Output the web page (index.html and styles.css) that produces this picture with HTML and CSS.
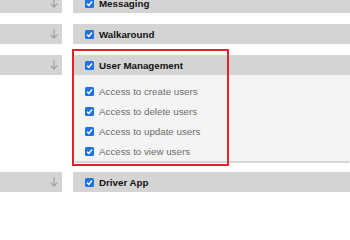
FILE: index.html
```html
<!DOCTYPE html>
<html>
<head>
<meta charset="utf-8">
<link rel="stylesheet" href="styles.css">
</head>
<body>
<div class="list">
  <div class="row row-cut">
    <div class="side"><svg class="arrow" viewBox="0 0 8 10"><path d="M4 0.5V9M0.8 5.8L4 9L7.2 5.8"/></svg></div>
    <div class="main"><div class="bar"><span class="cb"><svg viewBox="0 0 9 9"><path d="M2 4.7L3.8 6.4L7 2.6"/></svg></span><span class="title">Messaging</span></div></div>
  </div>
  <div class="row">
    <div class="side"><svg class="arrow" viewBox="0 0 8 10"><path d="M4 0.5V9M0.8 5.8L4 9L7.2 5.8"/></svg></div>
    <div class="main"><div class="bar"><span class="cb"><svg viewBox="0 0 9 9"><path d="M2 4.7L3.8 6.4L7 2.6"/></svg></span><span class="title">Walkaround</span></div></div>
  </div>
  <div class="row">
    <div class="side"><svg class="arrow" viewBox="0 0 8 10"><path d="M4 0.5V9M0.8 5.8L4 9L7.2 5.8"/></svg></div>
    <div class="main open">
      <div class="bar"><span class="cb"><svg viewBox="0 0 9 9"><path d="M2 4.7L3.8 6.4L7 2.6"/></svg></span><span class="title">User Management</span></div>
      <div class="panel">
        <div class="item"><span class="cb"><svg viewBox="0 0 9 9"><path d="M2 4.7L3.8 6.4L7 2.6"/></svg></span><span>Access to create users</span></div>
        <div class="item"><span class="cb"><svg viewBox="0 0 9 9"><path d="M2 4.7L3.8 6.4L7 2.6"/></svg></span><span>Access to delete users</span></div>
        <div class="item"><span class="cb"><svg viewBox="0 0 9 9"><path d="M2 4.7L3.8 6.4L7 2.6"/></svg></span><span>Access to update users</span></div>
        <div class="item"><span class="cb"><svg viewBox="0 0 9 9"><path d="M2 4.7L3.8 6.4L7 2.6"/></svg></span><span>Access to view users</span></div>
      </div>
      <div class="highlight"></div>
    </div>
  </div>
  <div class="row">
    <div class="side"><svg class="arrow" viewBox="0 0 8 10"><path d="M4 0.5V9M0.8 5.8L4 9L7.2 5.8"/></svg></div>
    <div class="main"><div class="bar"><span class="cb"><svg viewBox="0 0 9 9"><path d="M2 4.7L3.8 6.4L7 2.6"/></svg></span><span class="title">Driver App</span></div></div>
  </div>
</div>
</body>
</html>
```
FILE: styles.css
```css
html, body {
  margin: 0;
  padding: 0;
  background: #ffffff;
  overflow: hidden;
}
body {
  width: 350px;
  height: 202px;
  font-family: "Liberation Sans", Arial, sans-serif;
  font-size: 9.75px;
}
.list {
  display: flex;
  flex-direction: column;
  gap: 11px;
  margin-top: -7px;
}
.row {
  display: grid;
  grid-template-columns: 62px 1fr;
  column-gap: 11px;
  align-items: start;
}
.side {
  height: 20px;
  background: #d4d4d4;
  display: flex;
  align-items: center;
  justify-content: flex-end;
  padding-right: 4px;
  box-sizing: border-box;
}
.arrow {
  width: 8px;
  height: 10px;
  fill: none;
  stroke: #a3a3a3;
  stroke-width: 1.3;
}
.main {
  position: relative;
}
.bar {
  height: 20px;
  background: #d4d4d4;
  display: flex;
  align-items: center;
  padding-left: 12px;
}
.title {
  font-weight: bold;
  color: #111111;
}
.cb {
  width: 9px;
  height: 9px;
  border-radius: 1.5px;
  background: #1d72e2;
  display: inline-flex;
  margin-right: 5px;
  flex: none;
}
.cb svg {
  width: 9px;
  height: 9px;
  fill: none;
  stroke: #ffffff;
  stroke-width: 1.5;
}
.panel {
  background: #f4f4f4;
  padding: 6px 0 0 12px;
  box-shadow: 0 1.5px 1px rgba(0, 0, 0, 0.16);
}
.item {
  height: 20px;
  display: flex;
  align-items: center;
  color: #6d6d6d;
}
.highlight {
  position: absolute;
  left: -1px;
  top: -6px;
  width: 157px;
  height: 117px;
  box-sizing: border-box;
  border: 2px solid #e8202c;
  pointer-events: none;
}
```
